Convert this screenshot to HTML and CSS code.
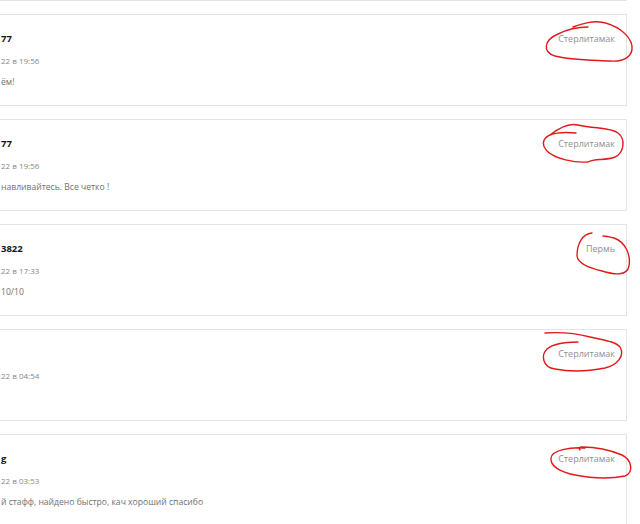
FILE: index.html
```html
<!DOCTYPE html>
<html lang="ru">
<head>
<meta charset="utf-8">
<link rel="stylesheet" href="styles.css">
</head>
<body>
<div class="list">
  <div class="card card-prev"></div>

  <div class="card">
    <div class="head"><span class="name">77</span><span class="city">Стерлитамак</span></div>
    <div class="date">22 в 19:56</div>
    <div class="text">ём!</div>
    <svg class="mark" width="110" height="70" viewBox="0 0 110 70"><path d="M43,17 C55,13 62,11 70,12 C85,14 100,24 102,36 C103,46 95,52 80,51 C60,50 40,50 25,46 C12,42 14,30 28,24 C38,19 50,17 58,17"/></svg>
  </div>

  <div class="card">
    <div class="head"><span class="name">77</span><span class="city">Стерлитамак</span></div>
    <div class="date">22 в 19:56</div>
    <div class="text">навливайтесь. Все четко !</div>
    <svg class="mark" width="110" height="70" viewBox="0 0 110 70"><path d="M46,18 C35,17 25,18 20,20 C30,12 40,8 48,10 C65,14 80,12 88,18 C96,24 94,38 85,42 C75,46 65,43 58,47 C45,48 25,44 17,36 C10,28 14,22 22,19"/></svg>
  </div>

  <div class="card">
    <div class="head"><span class="name">3822</span><span class="city">Пермь</span></div>
    <div class="date">22 в 17:33</div>
    <div class="text">10/10</div>
    <svg class="mark" width="110" height="70" viewBox="0 0 110 70"><path d="M62,13 C52,14 47,24 47,36 C48,44 60,48 72,51 C85,55 97,56 99,46 C101,34 95,22 84,18 C80,17 76,16 73,16"/></svg>
  </div>

  <div class="card">
    <div class="head"><span class="name"></span><span class="city">Стерлитамак</span></div>
    <div class="date">22 в 04:54</div>
    <div class="text"></div>
    <svg class="mark" width="110" height="70" viewBox="0 0 110 70"><path d="M15,8 C30,7 45,8 60,12 C72,15 85,16 90,22 C95,30 88,40 75,43 C60,46 40,47 25,44 C12,42 11,30 17,24 C23,19 35,17 48,17"/></svg>
  </div>

  <div class="card">
    <div class="head"><span class="name">g</span><span class="city">Стерлитамак</span></div>
    <div class="date">22 в 03:53</div>
    <div class="text">й стафф, найдено быстро, кач хороший спасибо</div>
    <svg class="mark" width="110" height="70" viewBox="0 0 110 70"><path d="M55,18 C40,17 22,20 21,28 C20,36 30,42 45,45 C60,48 80,49 95,46 C104,42 102,30 92,25 C80,20 65,17 52,17 C50,17 48,18 50,20"/></svg>
  </div>
</div>
</body>
</html>
```

FILE: styles.css
```css
html, body {
  margin: 0;
  padding: 0;
  background: #ffffff;
  overflow: hidden;
  height: 524px;
}

body {
  font-family: "Open Sans", "DejaVu Sans", sans-serif;
}

.list {
  display: flex;
  flex-direction: column;
  gap: 13px;
  margin-left: -40px;
  margin-right: 13px;
}

.card {
  position: relative;
  box-sizing: border-box;
  height: 92px;
  border: 1px solid #e4e4e4;
  background: #fff;
  padding: 17px 11px 0 40px;
}

.card-prev {
  margin-top: -91px;
}

.head {
  display: flex;
  justify-content: space-between;
  align-items: center;
  height: 14px;
}

.name {
  font-size: 9.5px;
  font-weight: 700;
  color: #151515;
  line-height: 14px;
}

.city {
  font-size: 9px;
  color: #909090;
  line-height: 14px;
}

.date {
  margin-top: 9px;
  font-size: 8px;
  line-height: 12px;
  color: #888888;
}

.text {
  margin-top: 8px;
  font-size: 8.6px;
  line-height: 14px;
  color: #717171;
  min-height: 14px;
}

.mark {
  position: absolute;
  right: -14px;
  top: -5px;
  fill: none;
  stroke: #e11a1a;
  stroke-width: 1.4;
  stroke-linecap: round;
  stroke-linejoin: round;
  overflow: visible;
}
```
